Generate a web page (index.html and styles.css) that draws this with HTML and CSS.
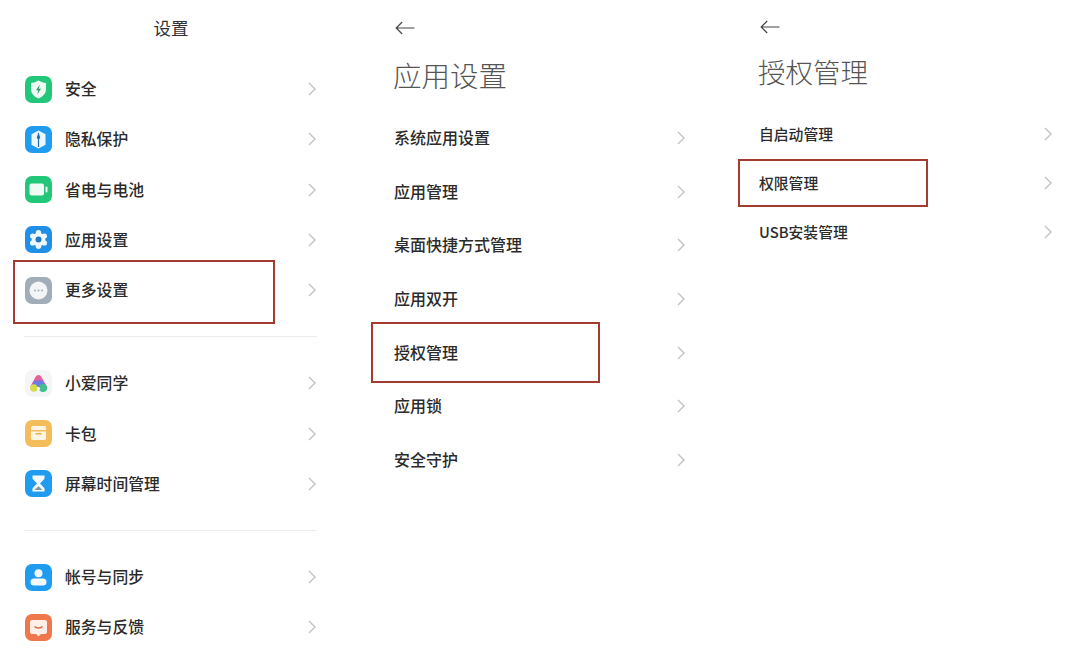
FILE: index.html
```html
<!DOCTYPE html>
<html lang="zh-CN">
<head>
<meta charset="utf-8">
<title>设置</title>
<link rel="stylesheet" href="styles.css">
</head>
<body>
<svg class="defs" width="0" height="0" aria-hidden="true">
  <defs>
    <symbol id="chev" viewBox="0 0 8 14"><path d="M1 1 7 7 1 13" fill="none" stroke="#c2c2c2" stroke-width="1.400"/></symbol>
    <symbol id="back" viewBox="0 0 20 14"><path d="M19.500 7H1.200M7.200 1 1.200 7l6 6" fill="none" stroke="#444" stroke-width="1.200"/></symbol>
  </defs>
</svg>
<main class="screens">
  <section class="panel panel-a">
    <h1 class="center-title">设置</h1>
    <div class="group">
      <div class="row"><svg class="icon" viewBox="0 0 27 27"><rect width="27" height="27" rx="7" fill="#22c77a"/><path d="M13.500 4.500c2.800 1.700 5 2.200 7.500 2.400v6.300c0 4.400-3.300 7.500-7.500 9.300-4.200-1.800-7.500-4.900-7.500-9.300V6.900c2.500-.2 4.700-.7 7.500-2.400z" fill="#eefaf3"/><path d="M14.800 8.500l-3.800 5.700h2.300l-1 4.300 3.700-5.700h-2.300z" fill="#2a9d6b"/></svg><span>安全</span><svg class="chev"><use href="#chev"/></svg></div>
      <div class="row"><svg class="icon" viewBox="0 0 27 27"><rect width="27" height="27" rx="7" fill="#1f9cf0"/><path d="M13.500 4.500l7 3.800v10.400l-7 3.800-7-3.800V8.300z" fill="#eef7fd"/><path d="M13.500 6l1.800 6-1.200 1V21h-1.200v-8l-1.200-1z" fill="#1f6fb0"/></svg><span>隐私保护</span><svg class="chev"><use href="#chev"/></svg></div>
      <div class="row"><svg class="icon" viewBox="0 0 27 27"><rect width="27" height="27" rx="7" fill="#22c77a"/><rect x="4.500" y="7.500" width="14.500" height="12" rx="2" fill="#eefaf3"/><rect x="20.500" y="10.500" width="2" height="6" rx="1" fill="#eefaf3"/></svg><span>省电与电池</span><svg class="chev"><use href="#chev"/></svg></div>
      <div class="row"><svg class="icon" viewBox="0 0 27 27"><rect width="27" height="27" rx="7" fill="#1f8fe8"/><g fill="#eef7fd"><circle cx="13.500" cy="13.500" r="6.800"/><circle cx="13.500" cy="6.800" r="2.700"/><circle cx="13.500" cy="20.200" r="2.700"/><circle cx="7.700" cy="10.100" r="2.700"/><circle cx="19.300" cy="10.100" r="2.700"/><circle cx="7.700" cy="16.900" r="2.700"/><circle cx="19.300" cy="16.900" r="2.700"/></g><circle cx="13.500" cy="13.500" r="3" fill="#1f78c8"/></svg><span>应用设置</span><svg class="chev"><use href="#chev"/></svg></div>
      <div class="row"><svg class="icon" viewBox="0 0 27 27"><rect width="27" height="27" rx="7" fill="#a1aeb9"/><circle cx="13.500" cy="13.500" r="9" fill="#f2f4f6"/><circle cx="10" cy="13.500" r="1" fill="#a1aeb9"/><circle cx="13.500" cy="13.500" r="1" fill="#a1aeb9"/><circle cx="17" cy="13.500" r="1" fill="#a1aeb9"/></svg><span>更多设置</span><svg class="chev"><use href="#chev"/></svg></div>
      <div class="mark mark-a"></div>
    </div>
    <hr class="rule">
    <div class="group">
      <div class="row"><svg class="icon" viewBox="0 0 27 27"><rect width="27" height="27" rx="7" fill="#f3f5f6"/><path d="M13.500 5c1.300 0 2.300.8 3 2l5.500 10H5l5.500-10c.7-1.200 1.700-2 3-2z" fill="#e85f9a"/><path d="M9.500 10.500h8l3.500 6.500H6z" fill="#6a7ce6"/><circle cx="8.800" cy="18" r="3.800" fill="#d4dc4e"/><circle cx="18" cy="18" r="4" fill="#3fbe8e"/><circle cx="13.500" cy="18.500" r="1.600" fill="#f3f5f6"/></svg><span>小爱同学</span><svg class="chev"><use href="#chev"/></svg></div>
      <div class="row"><svg class="icon" viewBox="0 0 27 27"><rect width="27" height="27" rx="7" fill="#f3bd5c"/><path d="M6 7.500a1.500 1.500 0 0 1 1.500-1.500h12A1.500 1.500 0 0 1 21 7.500v11a1.500 1.500 0 0 1-1.500 1.500h-12A1.500 1.500 0 0 1 6 18.500z" fill="#fdf5e4"/><rect x="6" y="10" width="15" height="1.500" fill="#f3bd5c"/><rect x="10.500" y="13" width="6" height="1.500" fill="#e7ae4c"/></svg><span>卡包</span><svg class="chev"><use href="#chev"/></svg></div>
      <div class="row"><svg class="icon" viewBox="0 0 27 27"><rect width="27" height="27" rx="7" fill="#1f9cf0"/><path d="M7.500 5.500h12v3.200l-4.500 4.800 4.500 4.800v3.200h-12v-3.200l4.500-4.800-4.500-4.800z" fill="#f3f9fd"/><path d="M9.500 20l4-3.700 4 3.700z" fill="#7f96a5"/></svg><span>屏幕时间管理</span><svg class="chev"><use href="#chev"/></svg></div>
    </div>
    <hr class="rule">
    <div class="group">
      <div class="row"><svg class="icon" viewBox="0 0 27 27"><rect width="27" height="27" rx="7" fill="#1f9cf0"/><circle cx="13.500" cy="9.300" r="4" fill="#f3f9fd"/><rect x="5.500" y="14.500" width="16" height="7" rx="3.500" fill="#f3f9fd"/></svg><span>帐号与同步</span><svg class="chev"><use href="#chev"/></svg></div>
      <div class="row"><svg class="icon" viewBox="0 0 27 27"><rect width="27" height="27" rx="7" fill="#f0764c"/><path d="M7 6h13a2 2 0 0 1 2 2v10a2 2 0 0 1-2 2h-4l-2.500 2.500L11 20H7a2 2 0 0 1-2-2V8a2 2 0 0 1 2-2z" fill="#fdeee8"/><path d="M9.500 12.500c2 2 6 2 8 0" fill="none" stroke="#d9663f" stroke-width="1.500"/></svg><span>服务与反馈</span><svg class="chev"><use href="#chev"/></svg></div>
    </div>
  </section>

  <section class="panel panel-b">
    <svg class="back"><use href="#back"/></svg>
    <h1 class="big-title">应用设置</h1>
    <div class="group">
      <div class="row"><span>系统应用设置</span><svg class="chev"><use href="#chev"/></svg></div>
      <div class="row"><span>应用管理</span><svg class="chev"><use href="#chev"/></svg></div>
      <div class="row"><span>桌面快捷方式管理</span><svg class="chev"><use href="#chev"/></svg></div>
      <div class="row"><span>应用双开</span><svg class="chev"><use href="#chev"/></svg></div>
      <div class="row"><span>授权管理</span><svg class="chev"><use href="#chev"/></svg></div>
      <div class="row"><span>应用锁</span><svg class="chev"><use href="#chev"/></svg></div>
      <div class="row"><span>安全守护</span><svg class="chev"><use href="#chev"/></svg></div>
      <div class="mark mark-b"></div>
    </div>
  </section>

  <section class="panel panel-c">
    <svg class="back"><use href="#back"/></svg>
    <h1 class="big-title">授权管理</h1>
    <div class="group">
      <div class="row"><span>自启动管理</span><svg class="chev"><use href="#chev"/></svg></div>
      <div class="row"><span>权限管理</span><svg class="chev"><use href="#chev"/></svg></div>
      <div class="row"><span>USB安装管理</span><svg class="chev"><use href="#chev"/></svg></div>
      <div class="mark mark-c"></div>
    </div>
  </section>
</main>
</body>
</html>
```

FILE: styles.css
```css
* { box-sizing: border-box; }
html, body { margin: 0; height: 100%; background: #fff; }
body {
  font-family: "Noto Sans CJK SC", "Noto Sans", sans-serif;
  color: #2b2b2b;
  overflow: hidden;
}
.defs { position: absolute; }
.screens { display: flex; width: 1080px; height: 672px; }
.panel { display: flex; flex-direction: column; flex: none; }
.group { position: relative; display: flex; flex-direction: column; }
.row { display: flex; align-items: center; font-size: 16px; font-weight: 500; line-height: 1; }
.row span { flex: 1; padding-bottom: 2px; }
.chev { width: 8px; height: 14px; flex: none; margin-right: 1px; }
.back { display: block; width: 20px; height: 14px; flex: none; }
h1 { margin: 0; font-weight: 300; }

/* Panel A: main settings */
.panel-a { width: 364px; padding: 0 47px 0 25px; }
.center-title { height: 56px; margin-bottom: 8px; font-size: 17.5px; line-height: 56px; text-align: center; font-weight: 400; color: #333; }
.panel-a .row { height: 50.25px; font-size: 15.8px; }
.panel-a .row span { padding-bottom: 0; }
.icon { width: 27px; height: 27px; flex: none; margin-right: 13px; }
.rule { width: 293px; height: 1px; margin: 21px 0 21px -1px; border: 0; background: #ececec; }

/* Panels B and C */
.big-title { color: #555; }
.panel-b { width: 366px; padding: 21px 0 0 30px; }
.panel-b .back { margin-left: 1px; }
.panel-b .big-title { margin: 20px 0 0 -1px; font-size: 28.5px; line-height: 40px; }
.panel-b .group { margin-top: 16px; width: 292px; }
.panel-b .row { height: 53.7px; }
.panel-c { width: 350px; padding: 20px 0 0 28px; }
.panel-c .back { margin-left: 2px; }
.panel-c .big-title { margin-top: 17px; font-size: 27.5px; line-height: 40px; }
.panel-c .group { margin-top: 19px; width: 295px; padding-left: 1px; }
.panel-c .row { height: 48.8px; font-size: 14.8px; }
.panel-c .row span { padding-bottom: 0; }

/* Red annotation boxes drawn over the rows */
.mark { position: absolute; border: 2px solid #a33b30; }
.mark-a { left: -12px; top: 196px; width: 262px; height: 64px; }
.mark-b { left: -23px; top: 211px; width: 229px; height: 61px; }
.mark-c { left: -20px; top: 49px; width: 190px; height: 48px; }
```
